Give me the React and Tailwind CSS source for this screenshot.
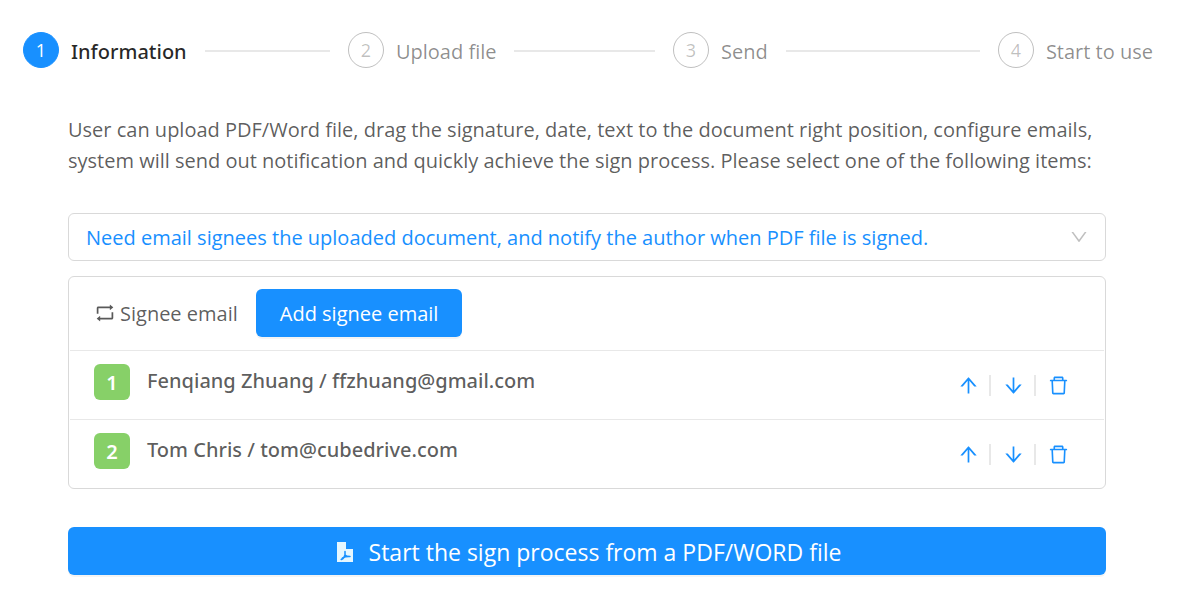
import {
    AiOutlineArrowDown,
    AiOutlineArrowUp,
    AiOutlineDelete,
    AiOutlineDown,
    AiOutlineRetweet,
} from 'react-icons/ai';

const STEPS = ['Information', 'Upload file', 'Send', 'Start to use'];

const SIGNEES = [
    { name: 'Fenqiang Zhuang', email: 'ffzhuang@gmail.com' },
    { name: 'Tom Chris', email: 'tom@cubedrive.com' },
];

function Steps({ current }) {
    return (
        <ol className="flex">
            {STEPS.map((title, i) => {
                const active = i === current;
                const last = i === STEPS.length - 1;
                return (
                    <li key={title} className={`flex h-9 items-center ${last ? 'flex-none' : 'flex-1'}`}>
                        <span
                            className={`flex size-9 shrink-0 items-center justify-center rounded-full border text-lg ${
                                active ? 'border-[#1890ff] bg-[#1890ff] text-white' : 'border-black/25 text-black/25'
                            }`}
                        >
                            {i + 1}
                        </span>
                        <span
                            className={`ml-3 whitespace-nowrap pt-1 text-[20px] leading-8 ${
                                active ? "font-['Noto_Sans',sans-serif] font-medium text-black/85" : 'text-black/45'
                            }`}
                        >
                            {title}
                        </span>
                        {!last && <span className="mx-[18px] mt-[2px] h-[2px] flex-1 bg-[#e8e8e8]" />}
                    </li>
                );
            })}
        </ol>
    );
}

function PdfIcon() {
    return (
        <svg viewBox="0 0 16 20" className="h-5 w-4" aria-hidden="true">
            <path d="M0 0h9v7h7v13H0z" fill="#e6f7ff" />
            <path
                d="M8 9.500v3.500M8 13c-.4 2-1.800 3.600-3.800 4.500M8 13c.8 1.200 2.600 1.500 5 1.500M5.500 16c1.600-.9 4-1.500 6.500-1.500"
                fill="none"
                stroke="#1890ff"
                strokeWidth="1.500"
                strokeLinecap="round"
            />
        </svg>
    );
}

function SigneeRow({ index, signee }) {
    return (
        <li className="flex items-center border-t border-[#e8e8e8] pl-6 pr-[34px]">
            <div className="flex h-[68px] flex-1 items-start pt-[13px] font-['Noto_Sans',sans-serif] text-[20px]">
                <span className="flex size-9 items-center justify-center rounded-md bg-[#87d068] pt-[2px] font-semibold text-white">
                    {index}
                </span>
                <span className="ml-[17px] pt-px font-medium leading-8 text-black/65">
                    {signee.name} / {signee.email}
                </span>
            </div>
            <div className="flex items-center text-[23px] text-[#1890ff]">
                <button type="button" aria-label="Move up"><AiOutlineArrowUp /></button>
                <span className="ml-[9px] mr-[11px] h-[21px] w-[2px] bg-[#e8e8e8]" />
                <button type="button" aria-label="Move down"><AiOutlineArrowDown /></button>
                <span className="ml-[9px] mr-[11px] h-[21px] w-[2px] bg-[#e8e8e8]" />
                <button type="button" aria-label="Delete"><AiOutlineDelete /></button>
            </div>
        </li>
    );
}

export default function App() {
    return (
        <div className="bg-white pb-6 pl-[23px] pr-[27px] pt-8 font-['Open_Sans',sans-serif] text-black/65">
            <Steps current={0} />
            <main className="pl-[45px] pr-[47px]">
                <p className="mt-[46px] text-[20px] leading-[31px]">
                    User can upload PDF/Word file, drag the signature, date, text to the document right position,
                    configure emails, system will send out notification and quickly achieve the sign process. Please
                    select one of the following items:
                </p>
                <div className="relative mt-[37px]">
                    <select
                        aria-label="Sign process"
                        className="h-12 w-full appearance-none rounded-md border border-[#d9d9d9] bg-white px-[17px] pt-[2px] text-[20px] text-[#1890ff]"
                    >
                        <option>
                            Need email signees the uploaded document, and notify the author when PDF file is signed.
                        </option>
                    </select>
                    <AiOutlineDown className="pointer-events-none absolute right-[17px] top-[14px] text-[20px] text-black/25" />
                </div>
                <section className="mt-[15px] rounded-md border border-[#d9d9d9] px-px">
                    <div className="flex items-center pb-[13px] pl-6 pt-3">
                        <AiOutlineRetweet className="size-[22px]" />
                        <span className="ml-1 mr-[18px] pt-[2px] text-[20px] leading-8">Signee email</span>
                        <button
                            type="button"
                            className="h-12 rounded-md bg-[#1890ff] px-6 pt-[2px] text-[20px] text-white shadow-[0_2px_0_rgba(0,0,0,0.045)]"
                        >
                            Add signee email
                        </button>
                    </div>
                    <ul>
                        {SIGNEES.map((signee, i) => (
                            <SigneeRow key={signee.email} index={i + 1} signee={signee} />
                        ))}
                    </ul>
                </section>
                <button
                    type="button"
                    className="mt-[38px] flex h-12 w-full items-center justify-center gap-4 rounded-md bg-[#1890ff] pl-1 pt-[2px] text-[23px] text-white shadow-[0_2px_0_rgba(0,0,0,0.045)]"
                >
                    <PdfIcon />
                    Start the sign process from a PDF/WORD file
                </button>
            </main>
        </div>
    );
}
